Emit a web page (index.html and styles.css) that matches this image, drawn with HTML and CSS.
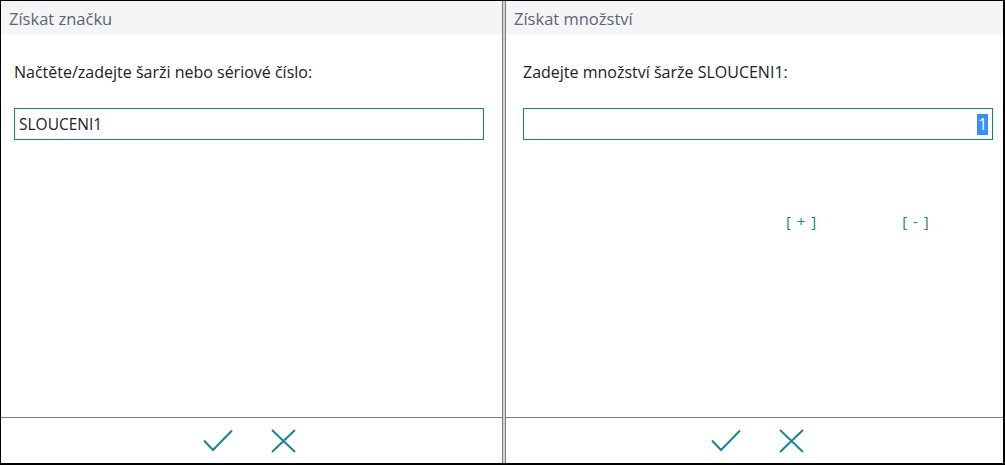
FILE: index.html
```html
<!DOCTYPE html>
<html lang="cs">
<head>
<meta charset="utf-8">
<link rel="stylesheet" href="styles.css">
</head>
<body>
<div class="frame">
  <section class="panel panel-left">
    <header class="panel-head">Získat značku</header>
    <div class="panel-body">
      <p class="prompt">Načtěte/zadejte šarži nebo sériové číslo:</p>
      <div class="field">SLOUCENI1</div>
    </div>
    <footer class="panel-foot">
      <svg class="icon icon-ok" width="30" height="23" viewBox="0 0 30 23"><polyline points="1,11.5 10,21 29,1.5" fill="none" stroke="#17869a" stroke-width="2"/></svg>
      <svg class="icon icon-cancel" width="25" height="24" viewBox="0 0 25 24"><path d="M1 1 L24 23 M24 1 L1 23" fill="none" stroke="#17869a" stroke-width="2"/></svg>
    </footer>
  </section>
  <div class="splitter"></div>
  <section class="panel panel-right">
    <header class="panel-head">Získat množství</header>
    <div class="panel-body">
      <p class="prompt">Zadejte množství šarže SLOUCENI1:</p>
      <div class="field field-num"><span class="sel">1</span></div>
      <div class="steppers">
        <span class="step step-plus">[ + ]</span>
        <span class="step step-minus">[ - ]</span>
      </div>
    </div>
    <footer class="panel-foot">
      <svg class="icon icon-ok" width="30" height="23" viewBox="0 0 30 23"><polyline points="1,11.5 10,21 29,1.5" fill="none" stroke="#17869a" stroke-width="2"/></svg>
      <svg class="icon icon-cancel" width="25" height="24" viewBox="0 0 25 24"><path d="M1 1 L24 23 M24 1 L1 23" fill="none" stroke="#17869a" stroke-width="2"/></svg>
    </footer>
  </section>
</div>
</body>
</html>
```

FILE: styles.css
```css
html, body {
  margin: 0;
  padding: 0;
  background: #ffffff;
}

.frame {
  width: 1005px;
  height: 465px;
  box-sizing: border-box;
  border-top: 1px solid #000;
  border-left: 1px solid #000;
  border-right: 2px solid #000;
  border-bottom: 2px solid #000;
  display: flex;
  font-family: "Open Sans", "Noto Sans", sans-serif;
}

.panel {
  display: flex;
  flex-direction: column;
  background: #fff;
}

.panel-left {
  width: 501px;
}

.panel-right {
  flex: 1;
}

.splitter {
  width: 2px;
  background: #d4d4d4;
  border-left: 1px solid #7a7a7a;
  border-right: 1px solid #7a7a7a;
}

.panel-head {
  height: 31px;
  padding-top: 2px;
  background: #f4f5f7;
  color: #5d6472;
  font-size: 16.5px;
  line-height: 31px;
  padding-left: 8px;
}

.panel-body {
  flex: 1;
  padding-top: 26px;
}

.panel-left .panel-body {
  padding-left: 13px;
}

.panel-right .panel-body {
  padding-left: 17px;
}

.prompt {
  margin: 0;
  font-size: 16px;
  line-height: 24px;
  color: #212121;
}

.field {
  margin-top: 24px;
  width: 470px;
  height: 32px;
  box-sizing: border-box;
  border: 1px solid #0e8585;
  padding: 0 4px;
  font-size: 15.5px;
  line-height: 30px;
  color: #212121;
}

.field-num {
  display: flex;
  justify-content: flex-end;
  align-items: center;
  padding-right: 4px;
}

.sel {
  background: #3390ff;
  color: #fff;
  line-height: 21px;
  padding: 0 1px;
}

.steppers {
  display: flex;
  margin-top: 71px;
  padding-left: 263px;
  gap: 85px;
}

.step {
  font-size: 15px;
  color: #1b7f8c;
  letter-spacing: 1px;
}

.panel-foot {
  height: 45px;
  border-top: 1px solid #7a7a7a;
  display: flex;
  justify-content: center;
  align-items: center;
  gap: 38px;
}

.panel-left .panel-foot {
  padding-right: 5px;
}

.panel-right .panel-foot {
  padding-left: 6px;
}
```
